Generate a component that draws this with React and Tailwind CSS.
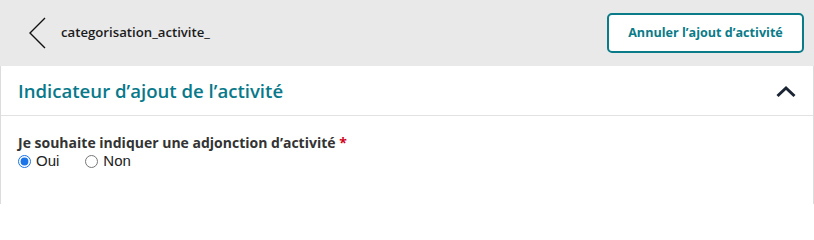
function Radio({ name, label, checked }) {
  return (
    <label className="flex items-center gap-[5px] font-['Liberation_Sans',Arial,sans-serif] text-[15px] text-[#222]">
      <input
        type="radio"
        name={name}
        defaultChecked={checked}
        className="m-0 h-[13px] w-[13px] accent-[#1a73e8]"
      />
      {label}
    </label>
  );
}

export default function App() {
  return (
    <div className="min-h-[202px] bg-[#e9e9e9] font-['Open_Sans',sans-serif]">
      <header className="flex h-[66px] items-center justify-between pl-[28px] pr-[10px]">
        <div className="flex items-center gap-[13px]">
          <svg width="20" height="32" viewBox="0 0 20 32" fill="none" className="text-[#111]">
            <path d="M17 1 L2 16 L17 31" stroke="currentColor" strokeWidth="1.4" />
          </svg>
          <span className="text-[13.2px] font-semibold text-[#1b1b1b]">categorisation_activite_</span>
        </div>
        <button className="h-[40px] w-[197px] rounded-[5px] border-2 border-[#0a7b88] bg-white text-[12.6px] font-bold text-[#0a7b88]">
          Annuler l’ajout d’activité
        </button>
      </header>

      <section className="border-x border-[#dcdcdc] bg-white">
        <div className="flex h-[50px] items-center justify-between border-b border-[#e2e2e2] pl-[17px] pr-[16px]">
          <h2 className="text-[18.6px] font-semibold text-[#07798a]">Indicateur d’ajout de l’activité</h2>
          <svg width="22" height="14" viewBox="0 0 22 14" fill="none">
            <path d="M2.5 12 L11 4 L19.5 12" stroke="#1b2433" strokeWidth="3" />
          </svg>
        </div>
        <div className="px-[17px] pb-[34px] pt-[18px]">
          <p className="text-[14px] font-bold leading-[18px] text-[#333]">
            Je souhaite indiquer une adjonction d’activité <span className="text-[#d0021b]">*</span>
          </p>
          <div className="flex items-center gap-[26px] leading-[18px]">
            <Radio name="adjonction" label="Oui" checked />
            <Radio name="adjonction" label="Non" />
          </div>
        </div>
      </section>
    </div>
  );
}
